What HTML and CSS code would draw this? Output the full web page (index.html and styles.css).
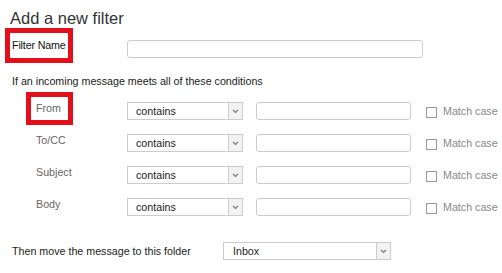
FILE: index.html
```html
<!DOCTYPE html>
<html>
<head>
<meta charset="utf-8">
<link rel="stylesheet" href="styles.css">
</head>
<body>
<div class="page">
  <h1 class="title">Add a new filter</h1>
  <div class="name-row">
    <span class="name-label mark">Filter Name</span>
    <span class="text-input name-input"></span>
  </div>
  <p class="intro">If an incoming message meets all of these conditions</p>
  <div class="conditions">
    <div class="cond-row">
      <div class="cond-cell"><span class="cond-label mark">From</span></div>
      <div class="select cond-select"><span class="select-text">contains</span><span class="select-arrow"><svg width="7" height="5" viewBox="0 0 7 5"><polyline points="1,1 3.5,3.5 6,1" fill="none" stroke="#777" stroke-width="1.1"/></svg></span></div>
      <span class="text-input cond-input"></span>
      <span class="check"></span><span class="check-label">Match case</span>
    </div>
    <div class="cond-row">
      <div class="cond-cell"><span class="cond-label">To/CC</span></div>
      <div class="select cond-select"><span class="select-text">contains</span><span class="select-arrow"><svg width="7" height="5" viewBox="0 0 7 5"><polyline points="1,1 3.5,3.5 6,1" fill="none" stroke="#777" stroke-width="1.1"/></svg></span></div>
      <span class="text-input cond-input"></span>
      <span class="check"></span><span class="check-label">Match case</span>
    </div>
    <div class="cond-row">
      <div class="cond-cell"><span class="cond-label">Subject</span></div>
      <div class="select cond-select"><span class="select-text">contains</span><span class="select-arrow"><svg width="7" height="5" viewBox="0 0 7 5"><polyline points="1,1 3.5,3.5 6,1" fill="none" stroke="#777" stroke-width="1.1"/></svg></span></div>
      <span class="text-input cond-input"></span>
      <span class="check"></span><span class="check-label">Match case</span>
    </div>
    <div class="cond-row">
      <div class="cond-cell"><span class="cond-label">Body</span></div>
      <div class="select cond-select"><span class="select-text">contains</span><span class="select-arrow"><svg width="7" height="5" viewBox="0 0 7 5"><polyline points="1,1 3.5,3.5 6,1" fill="none" stroke="#777" stroke-width="1.1"/></svg></span></div>
      <span class="text-input cond-input"></span>
      <span class="check"></span><span class="check-label">Match case</span>
    </div>
  </div>
  <div class="move-row">
    <span class="move-label">Then move the message to this folder</span>
    <div class="select folder-select"><span class="select-text">Inbox</span><span class="select-arrow"><svg width="7" height="5" viewBox="0 0 7 5"><polyline points="1,1 3.5,3.5 6,1" fill="none" stroke="#777" stroke-width="1.1"/></svg></span></div>
  </div>
</div>
</body>
</html>
```

FILE: styles.css
```css
* { box-sizing: border-box; }
html, body { margin: 0; padding: 0; background: #fff; }
body {
  font-family: "Liberation Sans", Arial, sans-serif;
  font-size: 10.7px;
  line-height: 13px;
  color: #222;
  width: 502px;
  height: 273px;
  overflow: hidden;
}
.page { padding: 0; }
.title {
  margin: 8px 0 0 10px;
  font-size: 16.5px;
  line-height: 20px;
  font-weight: normal;
  color: #333;
}
.mark { outline: 5px solid #e3101c; }
.name-row {
  display: flex;
  align-items: flex-end;
  margin-top: 5px;
  margin-left: 10px;
}
.name-label {
  display: block;
  width: 58px;
  padding: 6px 0 6px 2px;
  color: #111;
  white-space: nowrap;
  letter-spacing: -0.15px;
}
.text-input {
  display: block;
  height: 18px;
  background: #fff;
  border: 1px solid #ccc;
  border-radius: 3px;
}
.name-input { width: 296px; margin-left: 59px; }
.intro { margin: 17px 0 0 12px; color: #222; }
.conditions {
  margin-top: 14px;
  margin-left: 31px;
  display: flex;
  flex-direction: column;
  gap: 14px;
}
.cond-row {
  display: flex;
  align-items: flex-start;
  height: 18px;
}
.cond-cell { width: 96px; flex: none; }
.cond-label {
  display: inline-block;
  margin-top: -6px;
  padding: 5px 7px 5px 5px;
  color: #666;
}
.select {
  display: flex;
  height: 18px;
  border: 1px solid #ccc;
  background: #fff;
  flex: none;
}
.select-text {
  flex: 1;
  padding-left: 8px;
  line-height: 16px;
  color: #222;
}
.select-arrow {
  width: 14px;
  border-left: 1px solid #ccc;
  background: #f2f2f2;
  display: flex;
  align-items: center;
  justify-content: center;
}
.cond-select { width: 116px; }
.cond-input { width: 155px; margin-left: 13px; }
.check {
  width: 11px;
  height: 11px;
  border: 1px solid #999;
  margin: 5px 0 0 15px;
  flex: none;
}
.check-label {
  margin-left: 6px;
  margin-top: 3px;
  color: #888;
  white-space: nowrap;
}
.move-row {
  display: flex;
  align-items: center;
  margin-top: 26px;
  margin-left: 12px;
}
.move-label { width: 211px; color: #222; }
.folder-select { width: 168px; height: 18px; }
.folder-select .select-text { padding-left: 9px; }
```
